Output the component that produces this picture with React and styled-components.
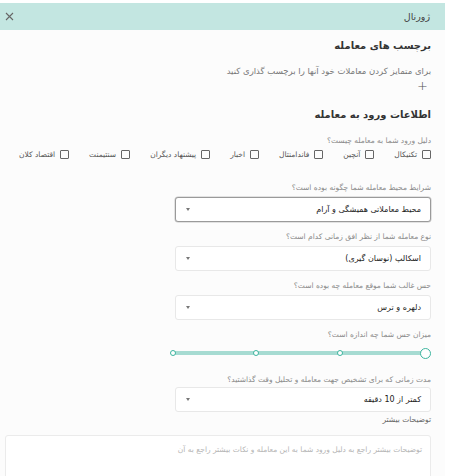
import React from 'react'
import styled, { createGlobalStyle } from 'styled-components'

const GlobalStyle = createGlobalStyle`
    html, body {
        margin: 0;
        padding: 0;
        background: #ffffff;
    }
    * {
        box-sizing: border-box;
    }
`

const reasons = ['تکنیکال', 'آنچین', 'فاندامنتال', 'اخبار', 'پیشنهاد دیگران', 'سنتیمنت', 'اقتصاد کلان']

function App() {
    return (
        <>
            <GlobalStyle />
            <PanelStyled dir="rtl">
                <div className="header">
                    <span className="title">ژورنال</span>
                    <button className="close" aria-label="close">
                        <svg width="9" height="9" viewBox="0 0 9 9">
                            <path d="M1 1 L8 8 M8 1 L1 8" stroke="#666" strokeWidth="1.1" fill="none" />
                        </svg>
                    </button>
                </div>
                <div className="content">
                    <Heading>برچسب های معامله</Heading>
                    <p className="hint">برای متمایز کردن معاملات خود آنها را برچسب گذاری کنید</p>
                    <button className="add">+</button>

                    <Heading $top={13}>اطلاعات ورود به معامله</Heading>
                    <Label $top={9}>دلیل ورود شما به معامله چیست؟</Label>
                    <CheckRow>
                        {reasons.map((r) => (
                            <CheckItem key={r}>
                                <Box />
                                <span>{r}</span>
                            </CheckItem>
                        ))}
                    </CheckRow>

                    <Label $top={22}>شرایط محیط معامله شما چگونه بوده است؟</Label>
                    <Select $active>
                        <span>محیط معاملاتی همیشگی و آرام</span>
                        <Caret />
                    </Select>

                    <Label $top={8}>نوع معامله شما از نظر افق زمانی کدام است؟</Label>
                    <Select>
                        <span>اسکالپ (نوسان گیری)</span>
                        <Caret />
                    </Select>

                    <Label $top={8}>حس غالب شما موقع معامله چه بوده است؟</Label>
                    <Select>
                        <span>دلهره و ترس</span>
                        <Caret />
                    </Select>

                    <Label $top={8}>میزان حس شما چه اندازه است؟</Label>
                    <Slider>
                        <Thumb $big />
                        <Thumb />
                        <Thumb />
                        <Thumb />
                    </Slider>

                    <Label $top={14}>مدت زمانی که برای تشخیص جهت معامله و تحلیل وقت گذاشتید؟</Label>
                    <Select $gap={0}>
                        <span>کمتر از 10 دقیقه</span>
                        <Caret />
                    </Select>

                    <Label $top={1} $dark>توضیحات بیشتر</Label>
                    <TextArea placeholder="توضیحات بیشتر راجع به دلیل ورود شما به این معامله و نکات بیشتر راجع به آن" />
                </div>
            </PanelStyled>
        </>
    )
}

const font = `"DejaVu Sans", "Liberation Sans", sans-serif`

const PanelStyled = styled.div`
    width: 445px;
    height: 476px;
    margin-top: 3px;
    background: #fcfcfc;
    font-family: ${font};
    overflow: hidden;
    .header{
        height: 27px;
        background: #c3e6e1;
        display: flex;
        align-items: center;
        justify-content: space-between;
        padding: 0 15px 0 3px;
        .title{
            font-size: 9.5px;
            color: #444;
        }
        .close{
            border: none;
            background: transparent;
            padding: 2px;
            display: flex;
            cursor: pointer;
        }
    }
    .content{
        padding: 6px 14px 0 5px;
        display: flex;
        flex-direction: column;
        align-items: flex-start;
    }
    .hint{
        margin: 8px 0 0;
        font-size: 8.5px;
        line-height: 14px;
        color: #777;
    }
    .add{
        border: none;
        background: transparent;
        padding: 0 3px;
        margin: 2px 0 0;
        font-family: ${font};
        font-size: 13px;
        line-height: 12px;
        color: #555;
        font-weight: 300;
    }
`

const Heading = styled.h2`
    margin: ${(p) => p.$top || 0}px 0 0;
    font-size: 10px;
    line-height: 20px;
    font-weight: bold;
    color: #333;
`

const Label = styled.div`
    margin-top: ${(p) => p.$top}px;
    font-size: 7.5px;
    line-height: 14px;
    color: ${(p) => (p.$dark ? '#666' : '#8a8a8a')};
`

const CheckRow = styled.div`
    display: flex;
    align-items: center;
    gap: 20px;
    margin-top: 2px;
`

const CheckItem = styled.label`
    display: flex;
    align-items: center;
    gap: 5px;
    font-size: 7.5px;
    color: #555;
    white-space: nowrap;
`

const Box = styled.span`
    width: 9px;
    height: 9px;
    border: 1.3px solid #666;
    border-radius: 1px;
    flex-shrink: 0;
`

const Select = styled.div`
    width: 256px;
    height: 25px;
    margin-top: ${(p) => (p.$gap === undefined ? 2 : p.$gap)}px;
    border: 1px solid ${(p) => (p.$active ? '#9a9a9a' : '#e8e8e8')};
    border-radius: 3px;
    background: #fff;
    box-shadow: ${(p) => (p.$active ? '0 0 0 0.5px #c8c8c8' : 'none')};
    display: flex;
    align-items: center;
    justify-content: space-between;
    padding: 0 9px 0 10px;
    font-size: 8px;
    color: #222;
`

const Caret = styled.span`
    width: 0;
    height: 0;
    border-left: 2.5px solid transparent;
    border-right: 2.5px solid transparent;
    border-top: 3px solid #777;
`

const Slider = styled.div`
    width: 261px;
    height: 12px;
    margin-top: 5px;
    display: flex;
    align-items: center;
    justify-content: space-between;
    background: linear-gradient(#a6dbd2, #a6dbd2) center / calc(100% - 8px) 4px no-repeat;
`

const Thumb = styled.span`
    width: ${(p) => (p.$big ? 11 : 6)}px;
    height: ${(p) => (p.$big ? 11 : 6)}px;
    border-radius: 50%;
    border: ${(p) => (p.$big ? 1.8 : 1.6)}px solid #3db59f;
    background: #fff;
    flex-shrink: 0;
`

const TextArea = styled.textarea`
    width: 426px;
    height: 60px;
    margin-top: 8px;
    border: 1px solid #ebebeb;
    border-radius: 3px;
    background: #fff;
    padding: 9px 8px;
    resize: none;
    font-family: ${font};
    font-size: 7.5px;
    direction: rtl;
    &::placeholder{
        color: #b5b5b5;
    }
`

export default App
